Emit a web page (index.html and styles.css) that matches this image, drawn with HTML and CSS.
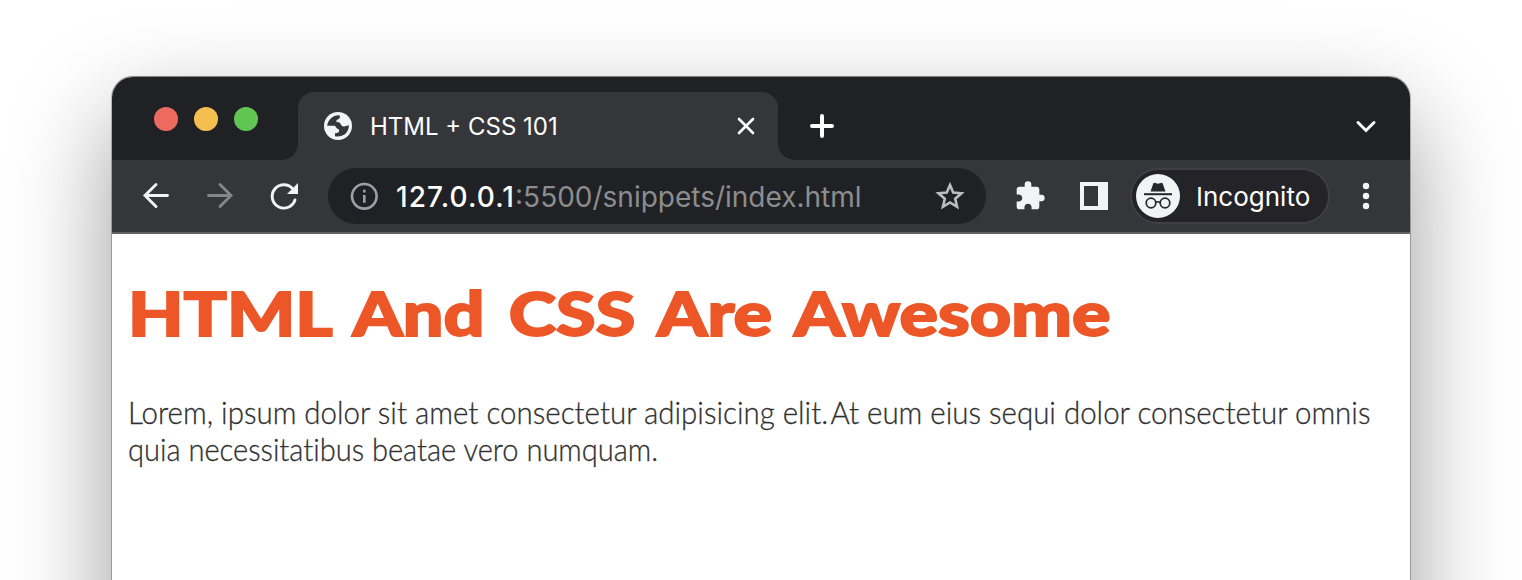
FILE: index.html
```html
<!DOCTYPE html>
<html lang="en">
<head>
<meta charset="utf-8">
<title>HTML + CSS 101</title>
<link rel="stylesheet" href="styles.css">
</head>
<body>
<div class="window">
  <header class="tabstrip">
    <div class="lights"><i class="light red"></i><i class="light yellow"></i><i class="light green"></i></div>
    <div class="tab">
      <svg class="globe" viewBox="0 0 28 28"><circle cx="14" cy="14" r="14" fill="#f1f3f4"/><path d="M3.200 13.800C4 7.500 9 3.500 14.500 3.300L16 3.800Q16.200 7 13.500 7.500Q11.800 8 12.500 10.200Q15.500 9.500 16.800 12.200Q18 15 21 14.200L24.900 13.300Q25 19 20.500 22.500Q16 25.200 11 24.200V21.300Q15.200 21 15.200 18.700Q15.200 17 13 16.500L10.800 13.800Z" fill="#35363a"/></svg>
      <span class="tab-title">HTML + CSS 101</span>
      <svg class="close" viewBox="0 0 20 20"><path d="M3 3L17 17M17 3L3 17"/></svg>
    </div>
    <svg class="plus" viewBox="0 0 28 28"><path d="M14 4V24M4 14H24"/></svg>
    <svg class="chevron" viewBox="0 0 24 24"><path d="M4 8.500L12 16.500L20 8.500"/></svg>
  </header>
  <nav class="toolbar">
    <svg class="nav-icon" viewBox="0 0 32 32"><path d="M27.500 15.500H5M16 4.500L5 15.500L16 26.500"/></svg>
    <svg class="nav-icon forward" viewBox="0 0 32 32"><path d="M4.500 15.500H27M16 4.500L27 15.500L16 26.500"/></svg>
    <svg class="nav-icon reload" viewBox="0 0 32 32"><path d="M24.500 8.500A11.700 11.700 0 1 0 27 20"/><path class="solid" d="M30 3V14H19Z"/></svg>
    <div class="omnibox">
      <svg class="info" viewBox="0 0 28 28"><circle cx="14.300" cy="14.300" r="12.300"/><path d="M14.300 13V20.800M14.300 7.800V10.600"/></svg>
      <span class="url"><b>127.0.0.1</b>:5500/snippets/index.html</span>
      <svg class="star" viewBox="0 0 30 30"><path d="M15 4L18.200 11.600L26.500 12.300L20.200 17.700L22.100 25.800L15 21.500L7.900 25.800L9.800 17.700L3.500 12.300L11.800 11.600Z"/></svg>
    </div>
    <svg class="puzzle" viewBox="0 0 24 24"><path d="M20.500 11H19V7c0-1.100-.9-2-2-2h-4V3.500a2.500 2.500 0 0 0-5 0V5H4c-1.100 0-1.990.9-1.990 2v3.800H3.500c1.490 0 2.700 1.210 2.700 2.700s-1.210 2.700-2.700 2.700H2V20c0 1.100.9 2 2 2h3.800v-1.500c0-1.490 1.210-2.700 2.700-2.700s2.700 1.210 2.700 2.700V22H17c1.100 0 2-.9 2-2v-4h1.500a2.500 2.500 0 0 0 0-5z"/></svg>
    <svg class="panel" viewBox="0 0 28 28"><path fill-rule="evenodd" d="M0 0H28V28H0ZM4 4V24H18V4Z"/></svg>
    <div class="profile">
      <svg class="spy" viewBox="0 0 44 44"><circle cx="22" cy="22" r="22" fill="#f1f3f4"/><path d="M14.500 17.500L17.300 9.500Q18 8.500 19.200 9L22 9.800L24.800 9Q26 8.500 26.700 9.500L29.500 17.500Z" fill="#27272c"/><path d="M8 20.200H36" stroke="#27272c" stroke-width="2"/><g fill="none" stroke="#27272c" stroke-width="1.700"><circle cx="15" cy="29" r="4.800"/><circle cx="29" cy="29" r="4.800"/><path d="M19.800 28.500Q22 27 24.200 28.500"/></g></svg>
      <span class="profile-name">Incognito</span>
    </div>
    <svg class="menu" viewBox="0 0 8 28"><circle cx="4" cy="4" r="3.200"/><circle cx="4" cy="14" r="3.200"/><circle cx="4" cy="24" r="3.200"/></svg>
  </nav>
  <main class="page">
    <h1 class="heading">HTML And CSS Are Awesome</h1>
    <p class="copy"><span class="line first">Lorem, ipsum dolor sit amet consectetur adipisicing elit.<span class="tight"> </span>At eum eius sequi dolor consectetur omnis</span> <span class="line second">quia necessitatibus beatae vero numquam.</span></p>
  </main>
</div>
</body>
</html>
```
FILE: styles.css
```css
* { box-sizing: border-box; }
html { height: 580px; overflow: hidden; background: #fff; }
body { margin: 0; padding: 77px 112px 0; height: 580px; overflow: hidden; background: #fff; }
svg { display: block; flex: none; }
.window { height: 700px; border-radius: 21px 21px 0 0; background: #fff; box-shadow: 0 0 0 1px rgba(0,0,0,.22), 0 -1px 1px 0 rgba(0,0,0,.3), 0 40px 100px rgba(0,0,0,.4); }
.tabstrip { display: flex; height: 83px; border-radius: 21px 21px 0 0; background: #202124; padding: 0 32px 0 42px; }
.lights { display: flex; gap: 16px; margin-top: 30px; width: 144px; }
.light { width: 24px; height: 24px; border-radius: 50%; }
.red { background: #ed6a5e; }
.yellow { background: #f5bf4f; }
.green { background: #61c554; }
.tab { position: relative; display: flex; align-items: center; width: 480px; height: 68px; margin-top: 15px; padding: 0 22px 0 26px; border-radius: 16px 16px 0 0; background: #35363a; }
.tab::before, .tab::after { content: ""; position: absolute; bottom: 0; width: 16px; height: 16px; }
.tab::before { left: -16px; background: radial-gradient(circle at 0 0, #202124 15.500px, #35363a 16px); }
.tab::after { right: -16px; background: radial-gradient(circle at 100% 0, #202124 15.500px, #35363a 16px); }
.globe { width: 28px; height: 28px; }
.tab-title { margin-left: 18px; padding-top: 2px; font: 400 24px/30px Inter, sans-serif; color: #fff; white-space: nowrap; }
.close { width: 20px; height: 20px; margin-left: auto; fill: none; stroke: #fff; stroke-width: 2.600; stroke-linecap: round; }
.plus { width: 28px; height: 28px; margin: 35px 0 0 30px; fill: none; stroke: #fff; stroke-width: 4; stroke-linecap: round; }
.chevron { width: 24px; height: 24px; margin: 37px 0 0 auto; fill: none; stroke: #fff; stroke-width: 3; stroke-linecap: round; }
.toolbar { display: flex; align-items: center; height: 74px; padding: 0 40px 0 28px; background: #35363a; border-bottom: 2px solid #606165; }
.nav-icon { width: 32px; height: 32px; margin-right: 32px; fill: none; stroke: #f1f3f4; stroke-width: 2.900; stroke-linecap: round; }
.forward { stroke: #85868a; }
.reload { margin-right: 28px; }
.solid { fill: #f1f3f4; stroke: none; }
.omnibox { display: flex; align-items: center; width: 658px; height: 56px; padding: 0 21px 0 22px; border-radius: 28px; background: #202124; }
.info { width: 28px; height: 28px; fill: none; stroke: #9aa0a6; stroke-width: 2.600; }
.url { margin-left: 18px; padding-top: 2px; font: 400 28px/36px Inter, sans-serif; color: #8c8d8f; white-space: nowrap; }
.url b { font-weight: 500; letter-spacing: 1.100px; color: #fff; }
.star { width: 30px; height: 30px; margin-left: auto; fill: none; stroke: #bdbdbe; stroke-width: 2.600; }
.puzzle { width: 32px; height: 32px; margin-left: 28px; fill: #f1f3f4; }
.panel { width: 28px; height: 28px; margin-left: 34px; fill: #f1f3f4; }
.profile { display: flex; align-items: center; width: 200px; height: 56px; margin-left: 22px; padding-left: 4px; border: 2px solid #3f3f45; border-radius: 28px; background: #242428; }
.spy { width: 44px; height: 44px; }
.profile-name { margin-left: 16px; padding-top: 2px; font: 400 26px/32px Inter, sans-serif; color: #fff; }
.menu { width: 8px; height: 28px; margin-left: auto; fill: #f1f3f4; }
.page { padding: 42px 16px 0; }
.heading { width: max-content; margin: 0; font: 900 60px/74px Lato, sans-serif; word-spacing: 6px; color: #ed5627; white-space: nowrap; -webkit-text-stroke: 1.800px #ed5627; transform: scaleX(1.197); transform-origin: 0 0; }
.copy { margin: 44px 0 0; font: 300 31px/37px Lato, sans-serif; font-variant-ligatures: none; color: #303030; white-space: nowrap; -webkit-text-stroke: .3px #303030; }
.line { display: block; width: max-content; transform-origin: 0 0; }
.first { transform: scaleX(.951); }
.second { transform: scaleX(.938); }
.tight { word-spacing: -6px; }
```
